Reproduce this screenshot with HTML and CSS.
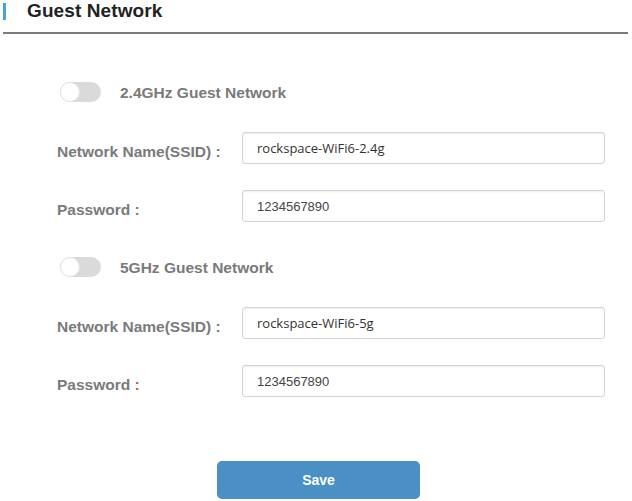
FILE: index.html
```html
<!DOCTYPE html>
<html lang="en">

<head>
    <meta charset="UTF-8">
    <meta name="viewport" content="width=device-width, initial-scale=1.0">
    <title>Guest Network</title>
    <link rel="stylesheet" href="styles.css">
</head>

<body>
    <div class="header">
        <h1 class="title">Guest Network</h1>
    </div>

    <form class="guest-form">
        <!-- 2.4GHz -->
        <div class="band">
            <div class="toggle-row">
                <span class="toggle"><span class="knob"></span></span>
                <span class="toggle-label">2.4GHz Guest Network</span>
            </div>
            <div class="field">
                <label for="ssid24">Network Name(SSID) :</label>
                <input type="text" id="ssid24" class="ssid" value="rockspace-WiFi6-2.4g">
            </div>
            <div class="field">
                <label for="pass24">Password :</label>
                <input type="text" id="pass24" class="pass" value="1234567890">
            </div>
        </div>

        <!-- 5GHz -->
        <div class="band">
            <div class="toggle-row">
                <span class="toggle"><span class="knob"></span></span>
                <span class="toggle-label">5GHz Guest Network</span>
            </div>
            <div class="field">
                <label for="ssid5">Network Name(SSID) :</label>
                <input type="text" id="ssid5" class="ssid" value="rockspace-WiFi6-5g">
            </div>
            <div class="field">
                <label for="pass5">Password :</label>
                <input type="text" id="pass5" class="pass" value="1234567890">
            </div>
        </div>

        <div class="actions">
            <button type="submit">Save</button>
        </div>
    </form>
</body>

</html>
```

FILE: styles.css
```css
body {
    margin: 0;
    font-family: "Liberation Sans", Arial, sans-serif;
    background-color: #fff;
}

.header {
    height: 29px;
    padding-top: 3px;
    margin: 0 4px 0 3px;
    border-bottom: 2px solid #7a7a7a;
}

.title {
    margin: 0;
    height: 17px;
    line-height: 16px;
    padding-left: 21px;
    border-left: 3px solid #45a5da;
    font-size: 19px;
    font-weight: bold;
    letter-spacing: 0.1px;
    color: #222;
}

.guest-form {
    padding: 48px 0 0 57px;
}

.band + .band {
    margin-top: 35px;
}

.toggle-row {
    display: flex;
    align-items: center;
    height: 20px;
    margin-bottom: 30px;
}

.toggle {
    position: relative;
    width: 41px;
    height: 20px;
    margin-left: 3px;
    border-radius: 10px;
    background-color: #dadada;
}

.knob {
    position: absolute;
    left: 0;
    top: 0;
    width: 18px;
    height: 18px;
    border: 1px solid #e3e3e3;
    border-radius: 50%;
    background: #fff;
}

.toggle-label {
    margin-left: 19px;
    padding-top: 2px;
    font-size: 15.5px;
    font-weight: bold;
    color: #7a7a7a;
}

.field {
    display: flex;
    align-items: center;
    height: 32px;
}

.field + .field {
    margin-top: 26px;
}

.field label {
    width: 185px;
    padding-top: 7px;
    font-size: 15.5px;
    font-weight: bold;
    color: #7a7a7a;
}

.field input {
    width: 363px;
    height: 32px;
    padding: 0 0 0 14px;
    border: 1px solid #d4d4d4;
    border-radius: 3px;
    box-shadow: inset 0 1px 2px rgba(0, 0, 0, 0.07);
    box-sizing: border-box;
    font-size: 13px;
    color: #333;
}

.field .ssid {
    font-family: "Open Sans", sans-serif;
}

.field .pass {
    font-family: "Liberation Sans", Arial, sans-serif;
    color: #444;
}

.actions {
    margin-top: 64px;
    padding-left: 160px;
}

button {
    width: 203px;
    height: 38px;
    border: none;
    border-radius: 5px;
    background-color: #4a90c4;
    color: #fff;
    font-family: "Liberation Sans", Arial, sans-serif;
    font-size: 14px;
    font-weight: bold;
    cursor: pointer;
}
```
